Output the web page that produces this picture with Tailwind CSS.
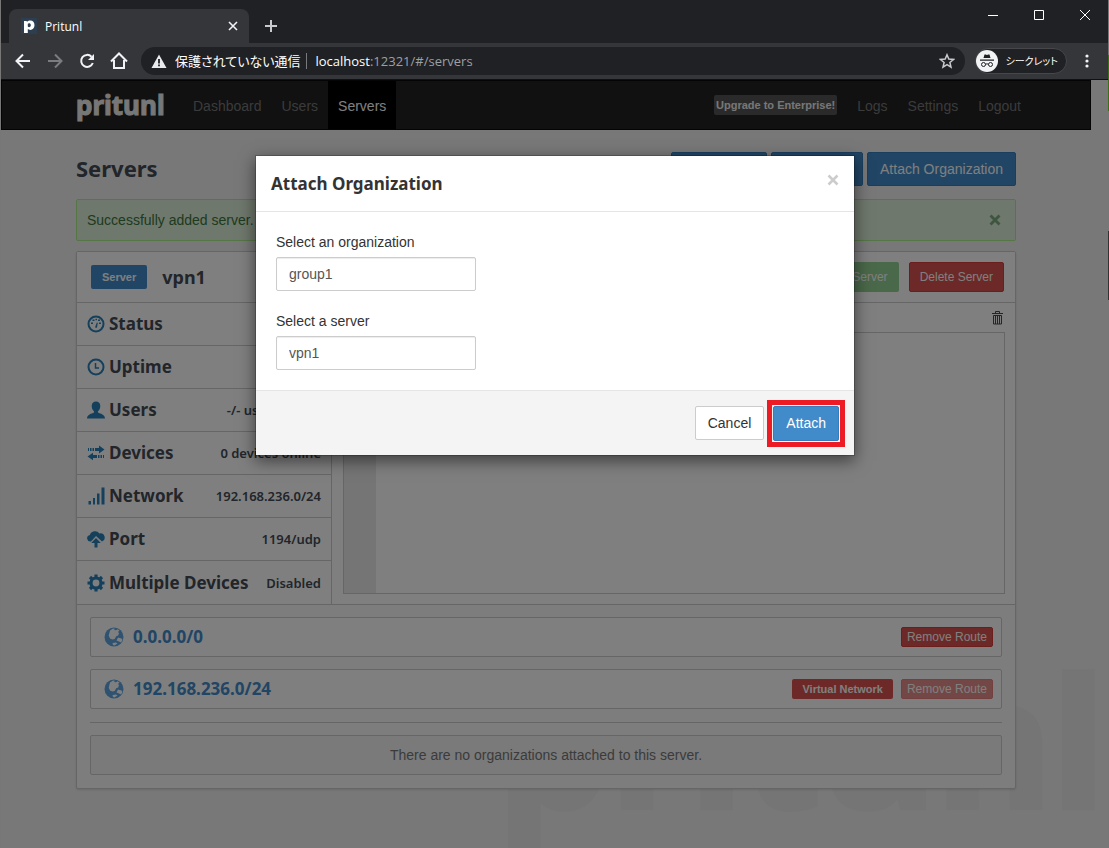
<!DOCTYPE html>
<html lang="ja">

<head>
    <meta charset="UTF-8">
    <meta name="viewport" content="width=device-width, initial-scale=1.0">
    <title>Pritunl</title>
    <script src="https://cdn.jsdelivr.net/npm/@tailwindcss/browser@4"></script>
</head>

<body class="flex min-h-screen flex-col border-l border-[#777] bg-[#f1f1f1] font-['Liberation_Sans',sans-serif] text-sm leading-5 text-[#333]">

    <!-- Browser window -->
    <header class="relative z-10 border-b border-[#111] bg-[#202124] font-['Open_Sans','Noto_Sans_CJK_JP',sans-serif] text-white">
        <div class="flex h-[43px] items-end justify-between pr-px">
            <div class="flex items-end">
                <div class="ml-2 flex h-[34px] w-[240px] items-center rounded-t-lg bg-[#35363a] px-3">
                    <svg class="size-4" viewBox="0 0 16 16">
                        <path fill="#2c3e50" d="M0 0h16v16H0z" />
                        <path fill="#fff" fill-rule="evenodd" d="M3 3h2.500l.5.700C7 3 8 2.500 9.300 2.500c2.600 0 4.200 2 4.200 4.700s-1.700 4.700-4.200 4.700c-1.100 0-1.800-.3-2.500-.8V15H3zM6.800 5.800v2.800c1 1 3 .6 3-1.400s-2-2.400-3-1.400z" />
                    </svg>
                    <span class="ml-2 flex-1 pt-px text-xs">Pritunl</span>
                    <button aria-label="Close tab" class="-mr-1">
                        <svg class="size-4" viewBox="0 0 16 16" stroke="#f1f3f4" stroke-width="1.600">
                            <path d="M4 4l8 8M12 4l-8 8" />
                        </svg>
                    </button>
                </div>
                <button aria-label="New tab" class="ml-3 flex h-[34px] w-5 items-center justify-center">
                    <svg class="size-4" viewBox="0 0 16 16" stroke="#c8cacc" stroke-width="2">
                        <path d="M8 2v12M2 8h12" />
                    </svg>
                </button>
            </div>
            <div class="flex h-[43px] pt-[7px]">
                <button aria-label="Minimize" class="flex h-4 w-[46px] justify-center">
                    <svg class="size-4" viewBox="0 0 16 16" stroke="#fff"><path d="M3 8.500h10" /></svg>
                </button>
                <button aria-label="Maximize" class="flex h-4 w-[46px] justify-center">
                    <svg class="size-4" viewBox="0 0 16 16" fill="none" stroke="#fff"><path d="M3.500 3.500h9v9h-9z" /></svg>
                </button>
                <button aria-label="Close" class="flex h-4 w-[46px] justify-center">
                    <svg class="size-4" viewBox="0 0 16 16" stroke="#fff"><path d="M3 3l10 10M13 3L3 13" /></svg>
                </button>
            </div>
        </div>
        <div class="flex h-9 items-center bg-[#35363a] pr-[14px] pl-3">
            <div class="flex gap-3">
                <button aria-label="Back">
                    <svg class="size-5" viewBox="0 0 20 20" fill="none" stroke="#f1f3f4" stroke-width="2"><path d="M17 10H4M10 3.500L3.500 10l6.500 6.500" /></svg>
                </button>
                <button aria-label="Forward">
                    <svg class="size-5" viewBox="0 0 20 20" fill="none" stroke="#7b7c7f" stroke-width="2"><path d="M3 10h13M10 3.500l6.500 6.500-6.500 6.500" /></svg>
                </button>
                <button aria-label="Reload">
                    <svg class="size-5" viewBox="0 0 20 20"><path fill="none" stroke="#f1f3f4" stroke-width="2" d="M14.500 5.700a6 6 0 1 0 1.300 6.300" /><path fill="#f1f3f4" d="M17 3v6h-6z" /></svg>
                </button>
                <button aria-label="Home">
                    <svg class="size-5" viewBox="0 0 20 20" fill="none" stroke="#f1f3f4" stroke-width="2"><path d="M2 10.500l8-8 8 8M5 9v8h10V9" /></svg>
                </button>
            </div>
            <div class="ml-3 flex h-7 flex-1 items-center rounded-full bg-[#202124] pr-[10px] pl-[10px] text-[13px]">
                <svg class="size-4" viewBox="0 0 16 16"><path fill="#e8eaed" d="M8 1.500L15.500 15H.500z" /><path stroke="#202124" stroke-width="1.800" d="M8 6v4.500M8 11.500v1.800" /></svg>
                <span class="ml-2 [font-feature-settings:'palt']">保護されていない通信</span>
                <span class="mr-2 ml-[6px] h-4 w-px bg-[#77797c]"></span>
                <span class="flex-1 text-[#9aa0a6]"><span class="font-medium text-white">localhost</span>:12321/#/servers</span>
                <button aria-label="Bookmark">
                    <svg class="size-4" viewBox="0 0 16 16" fill="none" stroke="#c8cacc" stroke-width="1.500"><path d="M8 1.800l1.800 4.300 4.700.4-3.600 3 1.100 4.600L8 11.700l-4 2.400 1.100-4.600-3.600-3 4.700-.4z" /></svg>
                </button>
            </div>
            <div class="ml-[10px] flex h-[26px] items-center rounded-full border border-[#46474b] bg-[#202124] pr-2">
                <svg class="size-[22px]" viewBox="0 0 22 22">
                    <circle cx="11" cy="11" r="11" fill="#f1f3f4" />
                    <path fill="#202124" d="M7.500 8L8.500 4.500h1.200l1.300.6 1.300-.6h1.200L14.500 8zM4 9.500h14v1.200H4z" />
                    <g fill="none" stroke="#202124"><circle cx="7.500" cy="14.500" r="2" /><circle cx="14.500" cy="14.500" r="2" /><path d="M9.500 14.300q1.500-1 3 0" /></g>
                </svg>
                <span class="ml-2 text-[10px] [font-feature-settings:'palt']">シークレット</span>
            </div>
            <button aria-label="Menu" class="ml-3">
                <svg class="size-4" viewBox="0 0 16 16" fill="#f1f3f4"><circle cx="8" cy="3" r="1.600" /><circle cx="8" cy="8" r="1.600" /><circle cx="8" cy="13" r="1.600" /></svg>
            </button>
        </div>
    </header>

    <!-- Page -->
    <div class="relative flex-1 overflow-hidden pr-[18px]">
        <div class="absolute right-1 bottom-[10px] font-['Noto_Sans',sans-serif] text-[178px] leading-[200px] font-bold text-[#ebebeb] [-webkit-text-stroke:6px_#ebebeb]" aria-hidden="true">pritunl</div>

        <nav class="relative border border-[#080808] bg-[#222]">
            <div class="mx-auto flex h-12 max-w-[970px] items-center pl-[15px] text-[#777]">
                <a href="#/" class="mr-[15px] w-[92px] font-['Noto_Sans',sans-serif] text-[26px] leading-10 font-bold text-[#eee] [-webkit-text-stroke:1px_#eee]">pritunl</a>
                <a href="#/dashboard" class="px-[10px] pt-[2px]">Dashboard</a>
                <a href="#/users" class="px-[10px] pt-[2px]">Users</a>
                <a href="#/servers" class="flex h-12 items-center bg-black px-[10px] pt-[2px] text-white">Servers</a>
                <div class="ml-auto flex items-center">
                    <a href="#/upgrade" class="mr-[10px] rounded-xs bg-[#555] px-[2px] text-[11px] font-bold text-[#eee]">Upgrade to Enterprise!</a>
                    <a href="#/logs" class="px-[10px] pt-[2px]">Logs</a>
                    <a href="#/settings" class="px-[10px] pt-[2px]">Settings</a>
                    <a href="#/logout" class="px-[10px] pt-[2px]">Logout</a>
                </div>
            </div>
        </nav>

        <main class="relative mx-auto max-w-[940px] pt-[22px]">
            <div class="flex items-start justify-between">
                <h1 class="font-['Noto_Sans',sans-serif] text-[22px] leading-8 font-bold text-[#444b54]">Servers</h1>
                <div class="flex gap-1 text-white">
                    <button class="h-[34px] rounded-xs border border-[#357ebd] bg-[#428bca] px-3">Add Server</button>
                    <button class="h-[34px] rounded-xs border border-[#357ebd] bg-[#428bca] px-3">Add Route</button>
                    <button class="h-[34px] rounded-xs border border-[#357ebd] bg-[#428bca] px-3">Attach Organization</button>
                </div>
            </div>

            <div class="mt-[13px] flex h-[42px] items-center justify-between rounded-xs border border-[#acec8c] bg-[#dff0d8] pr-[14px] pl-[10px] text-[#3c763d]">
                Successfully added server.
                <button aria-label="Dismiss">
                    <svg class="size-3" viewBox="0 0 12 12" stroke="#7caa80" stroke-width="2.800"><path d="M1.500 1.500l9 9M10.500 1.500l-9 9" /></svg>
                </button>
            </div>

            <!-- Server -->
            <section class="mt-[10px] rounded-xs border border-[#ccc] bg-[#fafafa] shadow-sm">
                <div class="flex h-[51px] items-center border-b border-[#ccc] bg-white pr-[11px] pl-[14px]">
                    <span class="rounded-xs bg-[#428bca] px-[11px] py-[2px] text-[11px] font-bold text-white">Server</span>
                    <h2 class="ml-[15px] font-['Noto_Sans',sans-serif] text-lg leading-6 font-bold text-[#444b54]">vpn1</h2>
                    <div class="ml-auto flex gap-[10px] text-xs text-white">
                        <button class="h-[30px] rounded-xs bg-[#5cb85c] px-[11px] opacity-65" disabled>Start Server</button>
                        <button class="h-[30px] rounded-xs border border-[#d43f3a] bg-[#d9534f] px-[10px]">Delete Server</button>
                    </div>
                </div>

                <div class="flex border-b border-[#ccc] bg-white">
                    <ul class="w-[255px] divide-y divide-[#ccc] border-r border-[#ccc] font-['Noto_Sans',sans-serif] text-[13px] font-semibold text-[#444b54]">
                        <li class="flex h-[43px] items-center px-[10px]">
                            <svg class="mr-1 size-[18px]" viewBox="0 0 18 18"><circle cx="9" cy="9" r="7.500" fill="none" stroke="#2980b9" stroke-width="2" /><path fill="#2980b9" d="M8 12.500L9.800 7.500l1 .3-.8 5zM4 7.500h2v1.500H4zM5.500 4.500h2V6h-2zM8.500 3.800h1.500v1.500H8.500zM11 4.500h2V6h-2zM12 7.500h2V9h-2z" /></svg>
                            <h3 class="text-[17px] font-bold">Status</h3><span class="ml-auto">Offline</span>
                        </li>
                        <li class="flex h-[43px] items-center px-[10px]">
                            <svg class="mr-1 size-[18px]" viewBox="0 0 18 18" fill="none" stroke="#2980b9"><circle cx="9" cy="9" r="7.500" stroke-width="2" /><path stroke-width="1.500" d="M8.500 5v5H12" /></svg>
                            <h3 class="text-[17px] font-bold">Uptime</h3><span class="ml-auto">-</span>
                        </li>
                        <li class="flex h-[43px] items-center px-[10px]">
                            <svg class="mr-1 size-[18px]" viewBox="0 0 18 18" fill="#2980b9"><path d="M9 .500c-2.600 0-4.300 1.700-4.300 4.500 0 2 .8 4 2.300 5.200v1.300C4.500 12.700 0 13.500 0 17.500h18c0-4-4.500-4.800-7-6v-1.300C12.500 9 13.300 7 13.300 5c0-2.800-1.700-4.500-4.300-4.500z" /></svg>
                            <h3 class="text-[17px] font-bold">Users</h3><span class="ml-auto">-/- users online</span>
                        </li>
                        <li class="flex h-[43px] items-center px-[10px]">
                            <svg class="mr-1 size-[18px]" viewBox="0 0 18 18" fill="#2980b9"><path d="M1 4h1v3H1zM3 4h1.500v3H3zM5.500 4H7v3H5.500zM8 4h4V1.500l5.500 4L12 9.500V7H8zM17 11h-1v3h1zM15 11h-1.500v3H15zM12.500 11H11v3h1.500zM10 11H6V8.800L.500 12.500 6 16.300V14h4z" /></svg>
                            <h3 class="text-[17px] font-bold">Devices</h3><span class="ml-auto">0 devices online</span>
                        </li>
                        <li class="flex h-[43px] items-center px-[10px]">
                            <svg class="mr-1 size-[18px]" viewBox="0 0 18 18" fill="#2980b9"><path d="M1.500 14H4v3.500H1.500zM6 11h2v6.500H6zM10 6.500h2.500v11H10zM14.500.500h3v17h-3z" /></svg>
                            <h3 class="text-[17px] font-bold">Network</h3><span class="ml-auto">192.168.236.0/24</span>
                        </li>
                        <li class="flex h-[43px] items-center px-[10px]">
                            <svg class="mr-1 size-[18px]" viewBox="0 0 18 18" fill="#2980b9"><path d="M4 11.500A3.300 3.300 0 0 1 2.800 5 5.500 5.500 0 0 1 12.500 3.500 4.200 4.200 0 0 1 15 11.500L9 6z" /><path d="M9 8l4.800 5H10.500v4.500h-3V13H4.200z" /></svg>
                            <h3 class="text-[17px] font-bold">Port</h3><span class="ml-auto">1194/udp</span>
                        </li>
                        <li class="flex h-[43px] items-center px-[10px]">
                            <svg class="mr-1 size-[18px]" viewBox="0 0 18 18"><circle cx="9" cy="9" r="5" fill="none" stroke="#2980b9" stroke-width="3.200" /><path fill="none" stroke="#2980b9" stroke-width="3.200" d="M9 .500v3M9 14.500v3M.500 9h3M14.500 9h3M3 3l2 2M13 13l2 2M15 3l-2 2M5 13l-2 2" /></svg>
                            <h3 class="text-[17px] font-bold">Multiple Devices</h3><span class="ml-auto">Disabled</span>
                        </li>
                    </ul>
                    <div class="flex flex-1 flex-col pr-[10px] pb-[10px] pl-[11px]">
                        <div class="flex h-[29px] items-center justify-end">
                            <button aria-label="Clear output">
                                <svg class="size-4" viewBox="0 0 16 16" fill="none" stroke="#444b54"><path d="M3 3.500h11M6.500 3V1.500h4V3M4.500 5.500h8v8.500h-8zM6.500 6v8M8.500 6v8M10.500 6v8" /></svg>
                            </button>
                        </div>
                        <div class="flex flex-1 border border-[#ccc]">
                            <div class="w-8 bg-[#ebebeb]"></div>
                        </div>
                    </div>
                </div>

                <div class="flex flex-col gap-3 p-[13px] pt-3">
                    <div class="flex h-10 items-center rounded-xs border border-[#ccc] bg-white px-2">
                        <svg class="ml-[5px] size-5" viewBox="0 0 20 20"><circle cx="10" cy="10" r="9.500" fill="#5ca4e0" /><path fill="#fff" d="M6 3.500l3-2 2 .3-1 1.200 2 .2 1.500-1 2 1.300-1.500 1.500 1 1-.8 2.500-2 .8-1.500 2.700-2 .5-2.500-.8-1.500-3zM14 10.500l3.500 1 1 1.500-1.500 2.500-2-1-2.500-1zM8.500 16l3.500-.5 1.500 1-3 2-1.500-.5z" /></svg>
                        <a href="#/route/0.0.0.0" class="ml-[9px] font-['Noto_Sans',sans-serif] text-[17px] leading-6 font-bold text-[#428bca]">0.0.0.0/0</a>
                        <button class="ml-auto h-5 rounded-xs border border-[#d43f3a] bg-[#d9534f] px-[5px] text-xs leading-4 text-white">Remove Route</button>
                    </div>
                    <div class="flex h-10 items-center rounded-xs border border-[#ccc] bg-white px-2">
                        <svg class="ml-[5px] size-5" viewBox="0 0 20 20"><circle cx="10" cy="10" r="9.500" fill="#5ca4e0" /><path fill="#fff" d="M6 3.500l3-2 2 .3-1 1.200 2 .2 1.500-1 2 1.300-1.500 1.500 1 1-.8 2.500-2 .8-1.500 2.700-2 .5-2.500-.8-1.500-3zM14 10.500l3.500 1 1 1.500-1.500 2.500-2-1-2.500-1zM8.500 16l3.500-.5 1.500 1-3 2-1.500-.5z" /></svg>
                        <a href="#/route/192.168.236.0" class="ml-[9px] font-['Noto_Sans',sans-serif] text-[17px] leading-6 font-bold text-[#428bca]">192.168.236.0/24</a>
                        <span class="mr-2 ml-auto rounded-xs bg-[#d9534f] px-[10px] text-[11px] font-bold text-white">Virtual Network</span>
                        <button class="h-5 rounded-xs border border-[#d43f3a] bg-[#d9534f] px-[5px] text-xs leading-4 text-white opacity-65" disabled>Remove Route</button>
                    </div>
                    <hr class="mt-px border-[#ccc]">
                    <div class="flex h-10 items-center justify-center rounded-xs border border-[#ccc] bg-[#f5f5f5] text-[#777]">There are no organizations attached to this server.</div>
                </div>
            </section>
        </main>
    </div>

    <!-- Attach Organization modal -->
    <div class="absolute inset-0 left-px flex items-start justify-center bg-black/50 pt-[155px]">
        <div role="dialog" aria-labelledby="modal-title" class="w-[600px] border border-black/20 bg-white bg-clip-padding shadow-[0_5px_15px_rgba(0,0,0,0.5)]">
            <div class="flex h-14 items-center justify-between border-b border-[#e5e5e5] px-[15px]">
                <h2 id="modal-title" class="font-['Noto_Sans',sans-serif] text-[17px] font-bold">Attach Organization</h2>
                <button aria-label="Close" class="mb-2">
                    <svg class="size-3" viewBox="0 0 12 12" stroke="#ccc" stroke-width="2.500"><path d="M1.500 1.500l9 9M10.500 1.500l-9 9" /></svg>
                </button>
            </div>
            <form id="attach-form" class="flex h-[178px] flex-col items-start px-5 pt-5">
                <label for="org" class="mb-[5px]">Select an organization</label>
                <select id="org" class="mb-5 h-[34px] w-[200px] appearance-none rounded-xs border border-[#ccc] bg-white px-3 text-[#555] shadow-[inset_0_1px_1px_rgba(0,0,0,0.075)]">
                    <option>group1</option>
                </select>
                <label for="server" class="mb-[5px]">Select a server</label>
                <select id="server" class="h-[34px] w-[200px] appearance-none rounded-xs border border-[#ccc] bg-white px-3 text-[#555] shadow-[inset_0_1px_1px_rgba(0,0,0,0.075)]">
                    <option>vpn1</option>
                </select>
            </form>
            <div class="flex h-[65px] items-center justify-end gap-[3px] border-t border-[#e5e5e5] bg-[#f4f4f4] pr-[9px]">
                <button type="button" class="h-[34px] rounded-xs border border-[#ccc] bg-white px-3">Cancel</button>
                <div class="border-5 border-[#ed1c24] p-px">
                    <button type="submit" form="attach-form" class="block h-[35px] rounded-xs border border-[#357ebd] bg-[#428bca] px-3 text-white">Attach</button>
                </div>
            </div>
        </div>
    </div>

    <!-- Window edge -->
    <div class="absolute inset-y-0 right-0 z-20 w-px bg-[#777]">
        <div class="mt-[55px] h-14 bg-[#3c6e1e]"></div>
        <div class="mt-[120px] h-[69px] bg-[#333]"></div>
    </div>

</body>

</html>
